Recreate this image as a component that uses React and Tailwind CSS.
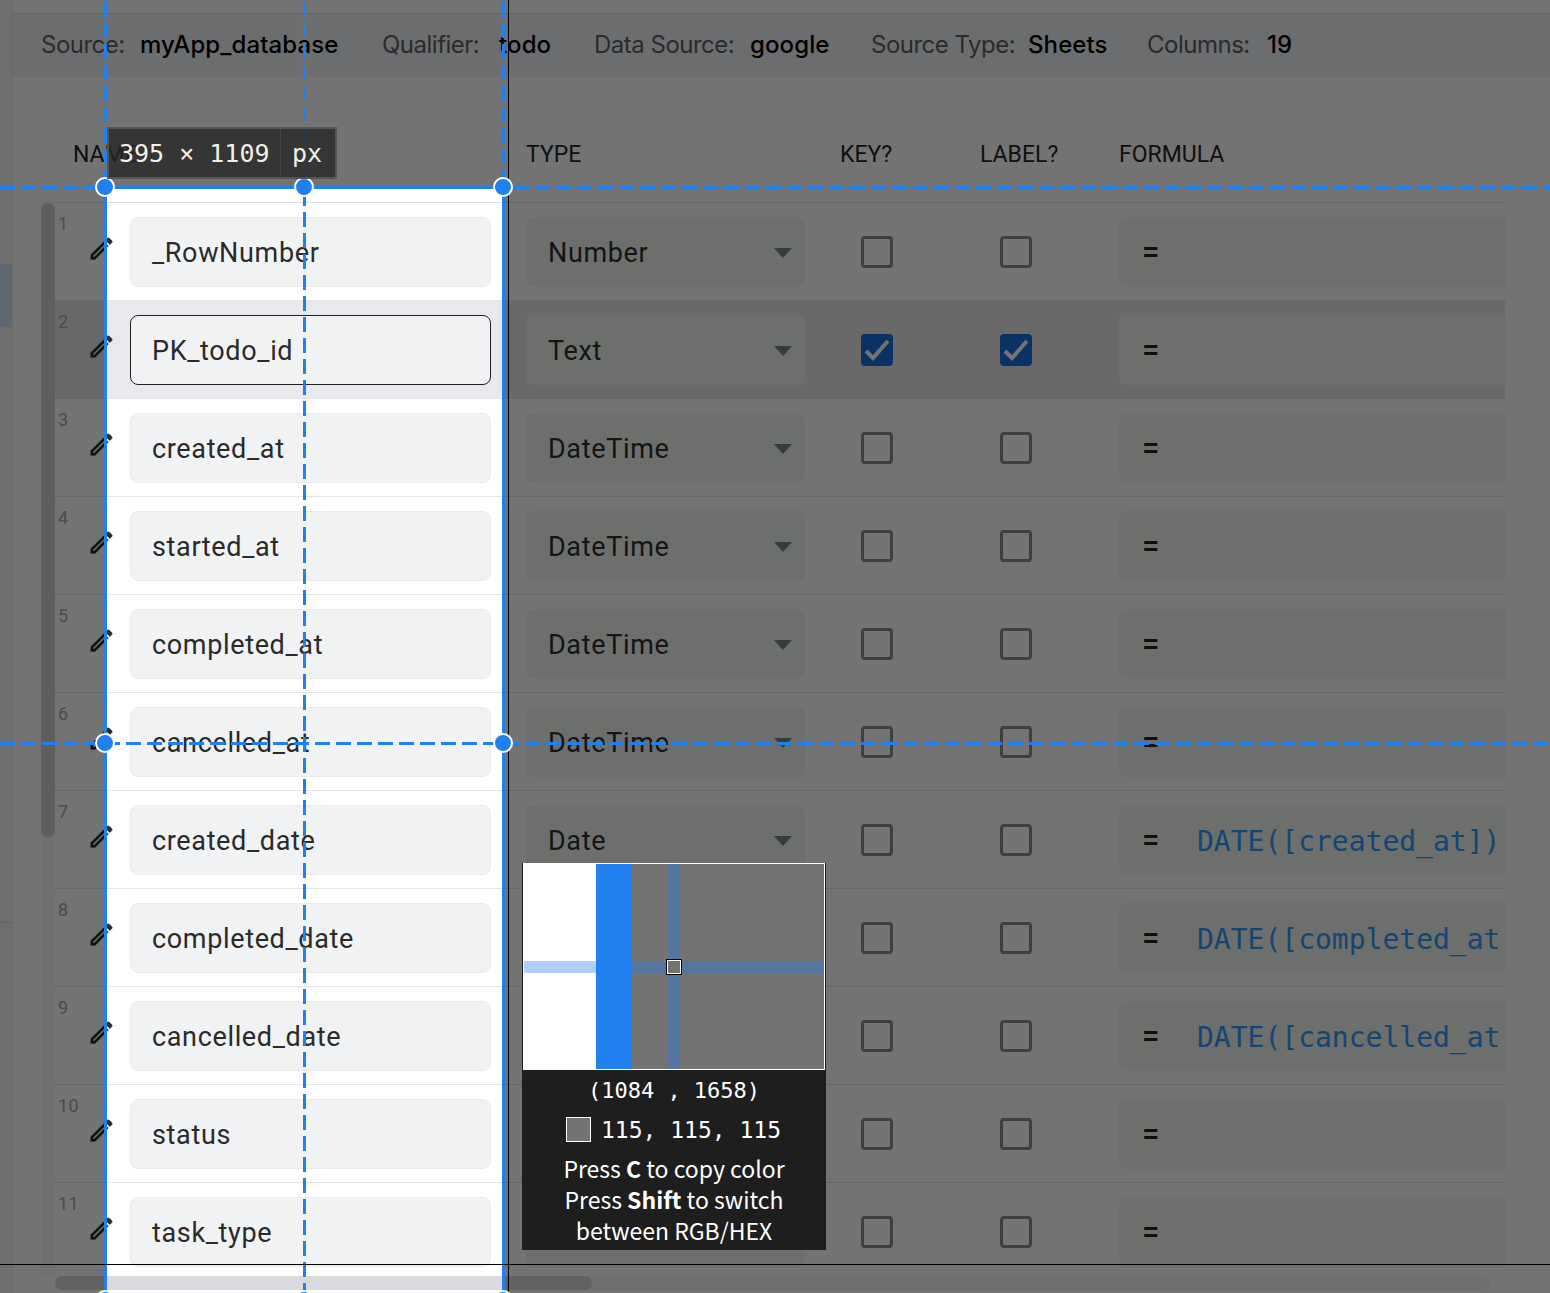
import React from "react";

const sourceInfo = [
  { label: "Source:", value: "myApp_database", item: "w-[341px]", labelBox: "w-[99px]" },
  { label: "Qualifier:", value: "todo", item: "w-[212px]", labelBox: "w-[117px]" },
  { label: "Data Source:", value: "google", item: "w-[277px]", labelBox: "w-[156px]" },
  { label: "Source Type:", value: "Sheets", item: "w-[276px]", labelBox: "w-[157px]" },
  { label: "Columns:", value: "19", item: "w-[200px]", labelBox: "w-[120px]" },
];

const columns = [
  { name: "_RowNumber", type: "Number" },
  { name: "PK_todo_id", type: "Text", key: true, label: true, active: true },
  { name: "created_at", type: "DateTime" },
  { name: "started_at", type: "DateTime" },
  { name: "completed_at", type: "DateTime" },
  { name: "cancelled_at", type: "DateTime" },
  { name: "created_date", type: "Date", formula: "DATE([created_at])" },
  { name: "completed_date", type: "Date", formula: "DATE([completed_at])" },
  { name: "cancelled_date", type: "Date", formula: "DATE([cancelled_at])" },
  { name: "status", type: "Enum" },
  { name: "task_type", type: "Enum" },
];

const handles = [
  "left-[95px] top-[177px]",
  "left-[294px] top-[177px]",
  "left-[493px] top-[177px]",
  "left-[95px] top-[733px]",
  "left-[493px] top-[733px]",
  "left-[95px] top-[1290px]",
  "left-[294px] top-[1290px]",
  "left-[493px] top-[1290px]",
];

const dashV = "bg-[repeating-linear-gradient(to_bottom,#2080f0_0,#2080f0_15px,transparent_15px,transparent_21px)]";
const dashH = "bg-[repeating-linear-gradient(to_right,#2080f0_0,#2080f0_15px,transparent_15px,transparent_21px)]";

const EditIcon = () => (
  <svg viewBox="0 0 24 24" className="w-[29px] h-[29px] ml-[29px] fill-[#2b2b2b] stroke-[#2b2b2b] stroke-[0.2]">
    <path d="M14.06 9.02l.92.92L5.92 19H5v-.92l9.06-9.06M17.66 3c-.25 0-.51.1-.7.29l-1.83 1.83 3.75 3.75 1.83-1.83c.39-.39.39-1.02 0-1.41l-2.34-2.34c-.2-.2-.45-.29-.71-.29zm-3.6 3.19L3 17.25V21h3.75L17.81 9.94l-3.75-3.75z" />
  </svg>
);

const Checkbox = ({ checked, className }) =>
  checked ? (
    <div className={`w-8 h-8 mt-[19px] rounded-[4px] bg-[#1a70e0] flex items-center justify-center ${className}`}>
      <svg viewBox="0 0 32 32" className="w-8 h-8 fill-none stroke-white stroke-[4]">
        <path d="M5 17l7 7L27 7" />
      </svg>
    </div>
  ) : (
    <div className={`w-8 h-8 mt-[19px] rounded-[4px] border-[3px] border-[#8c8c8c] ${className}`} />
  );

const Row = ({ col, index }) => (
  <div className={`flex h-[98px] w-[1600px] shrink-0 border-b border-[#e4e5e8] pt-[14px] ${col.active ? "bg-[#e8e9ec]" : "bg-white"}`}>
    <div className="w-[75px] shrink-0 -mt-[3px] pl-[3px] font-['Roboto',sans-serif]">
      <div className="h-[20px] text-[18px] leading-[20px] tracking-[0.4px] text-[#a8a8a8]">{index + 1}</div>
      <EditIcon />
    </div>
    <div className={`w-[361px] h-[70px] shrink-0 rounded-[8px] border bg-[#f1f2f4] pl-[21px] pt-[2px] flex items-center font-['Roboto',sans-serif] text-[27px] tracking-[0.65px] text-[#2a2a2a] ${col.active ? "border-[#1f1f1f]" : "border-[#e9eaec]"}`}>
      {col.name}
    </div>
    <div className="w-[279px] h-[70px] shrink-0 ml-[35px] rounded-[8px] bg-[#f1f5f1] pl-[22px] pr-[13px] pt-[2px] flex items-center justify-between font-['Roboto',sans-serif] text-[27px] tracking-[0.65px] text-[#303030]">
      {col.type}
      <svg viewBox="0 0 18 10" className="w-[18px] h-[10px] fill-[#7d8488]">
        <path d="M0 0h18L9 10z" />
      </svg>
    </div>
    <Checkbox checked={col.key} className="ml-[56px]" />
    <Checkbox checked={col.label} className="ml-[107px]" />
    <div className="w-[420px] h-[70px] shrink-0 ml-[87px] rounded-[8px] bg-[#f1f5f1] pl-[23px] flex items-center">
      <span className="w-[55px] shrink-0 font-['Roboto',sans-serif] font-medium text-[31px] text-[#222]">=</span>
      <span className="w-[304px] pt-[3px] overflow-hidden whitespace-nowrap font-['DejaVu_Sans_Mono',monospace] text-[28px] text-[#2a9cff]">
        {col.formula}
      </span>
    </div>
  </div>
);

const Loupe = () => (
  <div className="absolute left-[522px] top-[863px] w-[304px] h-[387px] bg-[#1e1e1e] text-white text-center">
    <svg viewBox="0 0 304 207" className="block w-[304px] h-[207px]">
      <rect x="1" y="0" width="302" height="207" fill="#fff" />
      <rect x="2" y="1" width="300" height="205" fill="#737373" />
      <rect x="2" y="1" width="72" height="205" fill="#fff" />
      <rect x="74" y="1" width="36" height="205" fill="#2080f0" />
      <rect x="146" y="1" width="12" height="205" fill="#55769f" />
      <rect x="2" y="98" width="72" height="12" fill="#aed0f8" />
      <rect x="110" y="98" width="192" height="12" fill="#55769f" />
      <rect x="144" y="96" width="16" height="16" fill="#000" />
      <rect x="145" y="97" width="14" height="14" fill="#fff" />
      <rect x="146" y="98" width="12" height="12" fill="#737373" />
    </svg>
    <div className="mt-[5px] h-[32px] font-['DejaVu_Sans_Mono',monospace] text-[22px] leading-[32px]">(1084 , 1658)</div>
    <div className="mt-[9px] h-[26px] flex items-center pl-[44px] font-['DejaVu_Sans_Mono',monospace] text-[23px]">
      <span className="w-[25px] h-[25px] mr-[10px] border border-white bg-[#737373]" />
      <span className="pt-[2px]">115, 115, 115</span>
    </div>
    <div className="mt-[11px] font-['Noto_Sans_CJK_KR','Noto_Sans',sans-serif] text-[23px] leading-[31px]">
      <div>Press <b>C</b> to copy color</div>
      <div>Press <b>Shift</b> to switch</div>
      <div>between RGB/HEX</div>
    </div>
  </div>
);

const App = () => {
  return (
    <div className="relative w-[1550px] h-[1293px] overflow-hidden bg-white flex">
      {/* left rail, only its edge is showing */}
      <aside className="w-[13px] shrink-0 h-full bg-[#f1f3f7] border-r border-[#e6e6e6]">
        <div className="h-[264px]" />
        <div className="h-[63px] bg-[#d3e6fb]" />
        <div className="h-[596px] border-b border-[#dcdcdc]" />
      </aside>

      <main className="flex-1 min-w-0 flex flex-col">
        <div className="h-[14px] shrink-0 border-b border-[#dedede]" />

        <div className="h-[63px] shrink-0 bg-[#f0f2f7] pl-[28px] pb-[1px] flex items-center font-['Inter',sans-serif] text-[24px]">
          {sourceInfo.map((s) => (
            <div key={s.label} className={`${s.item} flex items-center whitespace-nowrap`}>
              <span className={`${s.labelBox} tracking-[-0.5px] text-[#5f5f5f]`}>{s.label}</span>
              <span className="font-medium tracking-[0.1px] text-black">{s.value}</span>
            </div>
          ))}
        </div>

        {/* column titles */}
        <div className="h-[125px] shrink-0 pt-[64px] flex font-['Roboto',sans-serif] text-[23px] leading-[28px] text-[#262626]">
          <span className="w-[513px] pl-[60px]">NAME</span>
          <span className="w-[314px]">TYPE</span>
          <span className="w-[140px]">KEY?</span>
          <span className="w-[139px]">LABEL?</span>
          <span>FORMULA</span>
        </div>

        <div className="flex h-[1074px] shrink-0">
          <div className="ml-[28px] w-[14px] shrink-0 bg-[#f7f7f7]">
            <div className="h-[634px] mt-px rounded-full bg-[#d0d0d0]" />
          </div>
          <div className="w-[1450px] shrink-0 overflow-hidden border-t border-[#dedfe2] flex flex-col">
            {columns.map((col, i) => (
              <Row key={col.name} col={col} index={i} />
            ))}
          </div>
        </div>

        <div className="h-[14px] shrink-0 ml-[42px] w-[1435px] rounded-full bg-[#f6f6f6]">
          <div className="h-full w-[537px] rounded-full bg-[#d9dadd]" />
        </div>
      </main>

      {/* measuring overlay on top of the page */}
      <div className="absolute left-[104px] top-[186px] w-[401px] h-[1120px] border-[3px] border-[#2080f0] shadow-[0_0_0_2000px_rgba(0,0,0,0.55)]" />
      <div className={`absolute left-[104px] top-[2px] w-[3px] h-[184px] ${dashV}`} />
      <div className={`absolute left-[303px] top-[2px] w-[3px] h-[1291px] ${dashV}`} />
      <div className={`absolute left-[502px] top-[2px] w-[3px] h-[184px] ${dashV}`} />
      <div className={`absolute left-0 top-[186px] w-[104px] h-[3px] ${dashH}`} />
      <div className={`absolute left-[514px] top-[186px] w-[1036px] h-[3px] ${dashH}`} />
      <div className={`absolute left-0 top-[742px] w-[1550px] h-[3px] ${dashH}`} />
      <div className="absolute left-[508px] top-0 w-px h-full bg-black" />
      <div className="absolute left-0 top-[1264px] w-full h-px bg-black" />
      {handles.map((pos) => (
        <div key={pos} className={`absolute ${pos} w-[20px] h-[20px] rounded-full border-[2px] border-white bg-[#2080f0]`} />
      ))}

      <div className="absolute left-[107px] top-[127px] w-[230px] h-[52px] border-2 border-[#555] bg-[#252525]/80 flex items-center font-['DejaVu_Sans_Mono',monospace] text-[25px] text-[#f2efe6]">
        <span className="w-[172px] h-full pl-[10px] leading-[50px] border-r border-[#444] whitespace-nowrap">395 × 1109</span>
        <span className="pl-[11px] pt-[2px]">px</span>
      </div>

      <Loupe />
    </div>
  );
};

export default App;
